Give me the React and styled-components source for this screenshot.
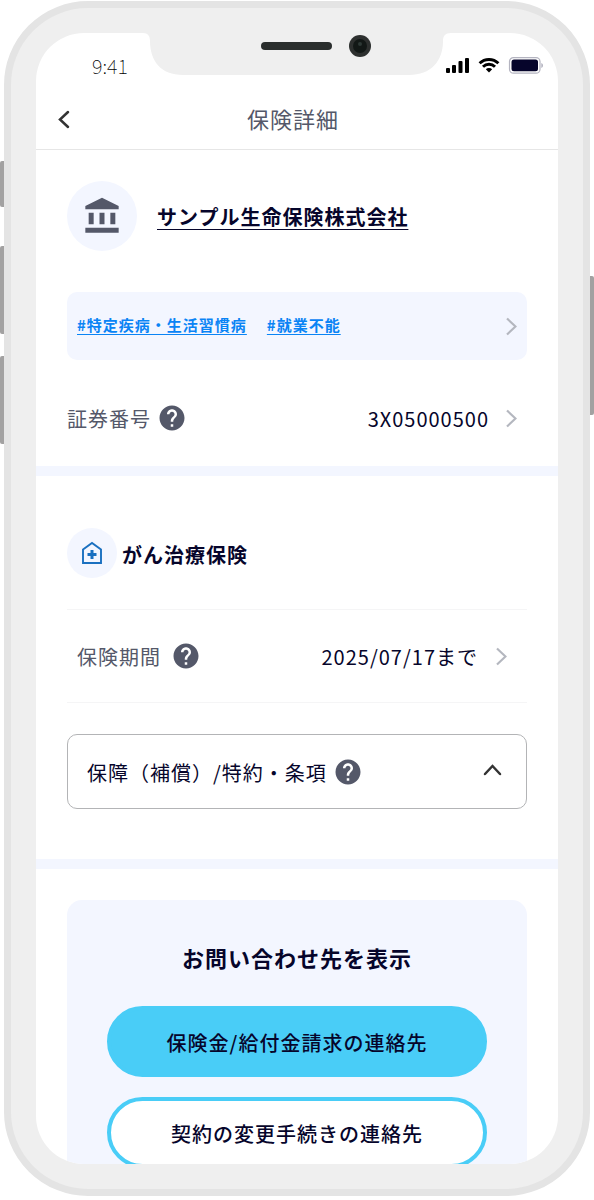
import React, { useState } from "react";
import styled, { createGlobalStyle, css } from "styled-components";
import { MdAccountBalance, MdHelp } from "react-icons/md";

const GlobalStyle = createGlobalStyle`
    *,
    *::before,
    *::after {
        box-sizing: border-box;
    }

    :root {
        --ink: #06052b;
        --gray: #545869;
        --pale: #f3f6ff;
        --link: #0a84f5;
        --sky: #49cdf7;
    }

    body {
        margin: 0;
        background: #fff;
        color: var(--ink);
        font-family: "Noto Sans CJK JP", "Noto Sans", sans-serif;
        font-size: 20px;
        letter-spacing: 1px;
    }

    button {
        padding: 0;
        border: none;
        background: none;
        color: inherit;
        font: inherit;
        letter-spacing: inherit;
        cursor: pointer;
    }

    svg {
        display: block;
    }
`;

const chevrons = {
    left: { width: 12, height: 19, d: "M10 2 2 9.500 10 17" },
    right: { width: 11, height: 19, d: "M1 1.500 9.500 9.500 1 17.500" },
    up: { width: 19, height: 12, d: "M2 10 9.500 2 17 10" },
};

const Chevron = ({ to = "right" }) => {
    const { width, height, d } = chevrons[to];
    return (
        <svg
            width={width}
            height={height}
            viewBox={`0 0 ${width} ${height}`}
            fill="none"
            stroke={to === "right" ? "#b4b7bf" : "#333"}
            strokeWidth={to === "right" ? 2.2 : 2.5}
            strokeLinecap={to === "right" ? "butt" : "round"}
            aria-hidden="true"
        >
            <path d={d} />
        </svg>
    );
};

const Notch = () => (
    <NotchSvg width="308" height="43" viewBox="0 0 308 43" aria-hidden="true">
        <path
            d="M0 0H308C302 0 300 3 300 8C300 28 288 42 266 42H40C18 42 7 28 7 8C7 3 5 0 0 0Z"
            fill="#efefef"
        />
        <rect x="118" y="9" width="71" height="8" rx="4" fill="#2a2e2d" />
        <circle cx="217" cy="13" r="11" fill="#2d302f" />
        <circle cx="217" cy="13" r="7" fill="#121816" />
        <circle cx="217" cy="11" r="2" fill="#2d3835" />
    </NotchSvg>
);

const StatusIcons = () => (
    <svg width="98" height="18" viewBox="0 0 98 18" aria-label="電波と電池">
        <g fill="#000">
            <rect x="0" y="11" width="4" height="5" rx="1" />
            <rect x="6" y="8" width="4" height="8" rx="1" />
            <rect x="12.500" y="4" width="4" height="12" rx="1" />
            <rect x="19" y="1" width="4" height="15" rx="1" />
            <path d="M43 15.500 39.800 12.300A4.600 4.600 0 0 1 46.200 12.300Z" />
        </g>
        <g fill="none" stroke="#000" strokeWidth="2.900">
            <path d="M33.600 6.300a13.400 13.400 0 0 1 18.800 0" />
            <path d="M37 9.800a8.500 8.500 0 0 1 12 0" />
        </g>
        <rect x="63.500" y=".6" width="30.500" height="15.600" rx="4" fill="none" stroke="#b4b4c0" strokeWidth="1.200" />
        <rect x="65.500" y="2.500" width="26.500" height="11.800" rx="2.500" fill="#06052b" />
        <path d="M95.400 6v5c2-.8 2-4.200 0-5Z" fill="#a9a9b8" />
    </svg>
);

const HouseIcon = () => (
    <svg width="22" height="24" viewBox="0 0 22 24" fill="none" stroke="#1a70c0" aria-hidden="true">
        <path d="M2 8.500 11 2l9 6.500V22H2Z" strokeWidth="1.900" />
        <path d="M11 9v9M6.500 13.500h9" strokeWidth="3" />
    </svg>
);

const Help = ({ about }) => (
    <button type="button" aria-label={`${about}について`}>
        <MdHelp size={30} color="#545869" />
    </button>
);

const App = () => {
    const [open, setOpen] = useState(true);

    return (
        <Stage>
            <GlobalStyle />
            <SideKey $top={161} $height={46} />
            <SideKey $top={246} $height={88} />
            <SideKey $top={356} $height={88} />
            <SideKey $top={276} $height={139} $right />
            <Phone>
                <Screen>
                    <Notch />
                    <StatusBar>
                        <Clock>9:41</Clock>
                        <StatusIcons />
                    </StatusBar>
                    <Header>
                        <button type="button" aria-label="戻る">
                            <Chevron to="left" />
                        </button>
                        <PageTitle>保険詳細</PageTitle>
                    </Header>

                    <CompanySection>
                        <Company>
                            <RoundIcon $size={70}>
                                <MdAccountBalance size={40} color="#545869" />
                            </RoundIcon>
                            <CompanyLink href="#company">
                                サンプル生命保険株式会社
                            </CompanyLink>
                        </Company>
                        <Tags>
                            <Tag href="#disease">#特定疾病・生活習慣病</Tag>
                            <Tag href="#disability">#就業不能</Tag>
                            <Chevron />
                        </Tags>
                        <PolicyRow>
                            <Label>証券番号</Label>
                            <Help about="証券番号" />
                            <Value>3X05000500</Value>
                            <Chevron />
                        </PolicyRow>
                    </CompanySection>

                    <PlanSection>
                        <Plan>
                            <RoundIcon $size={50}>
                                <HouseIcon />
                            </RoundIcon>
                            <PlanName>がん治療保険</PlanName>
                        </Plan>
                        <PeriodRow>
                            <Label>保険期間</Label>
                            <Help about="保険期間" />
                            <Value>2025/07/17まで</Value>
                            <Chevron />
                        </PeriodRow>
                        <Accordion>
                            <AccordionTitle>
                                保障（補償）/特約・条項
                            </AccordionTitle>
                            <Help about="保障" />
                            <Toggle
                                type="button"
                                aria-label="開閉"
                                aria-expanded={open}
                                $open={open}
                                onClick={() => setOpen(!open)}
                            >
                                <Chevron to="up" />
                            </Toggle>
                        </Accordion>
                    </PlanSection>

                    <ContactSection>
                        <ContactCard>
                            <ContactTitle>お問い合わせ先を表示</ContactTitle>
                            <PillButton type="button" $filled>
                                保険金/給付金請求の連絡先
                            </PillButton>
                            <PillButton type="button">
                                契約の変更手続きの連絡先
                            </PillButton>
                        </ContactCard>
                    </ContactSection>
                </Screen>
            </Phone>
        </Stage>
    );
};

const Stage = styled.div`
    position: relative;
    height: 100vh;
    padding: 1px 4px 4px;
    overflow: hidden;
`;

const SideKey = styled.span`
    position: absolute;
    top: ${({ $top }) => $top}px;
    width: 4px;
    height: ${({ $height }) => $height}px;
    background: #a2a1a1;
    ${({ $right }) =>
        $right
            ? css`
                  right: 0;
                  border-radius: 0 2px 2px 0;
              `
            : css`
                  left: 0;
                  border-radius: 2px 0 0 2px;
              `}
`;

const Phone = styled.div`
    height: 100%;
    padding: 25px;
    border: 7px solid #e4e4e4;
    border-radius: 84px;
    background: #efefef;
`;

const Screen = styled.main`
    position: relative;
    height: 100%;
    overflow: hidden;
    border-radius: 48px;
    background: #fff;
`;

const NotchSvg = styled.svg`
    position: absolute;
    top: 0;
    left: 50%;
    transform: translateX(-50%);
`;

const StatusBar = styled.div`
    display: flex;
    justify-content: space-between;
    align-items: center;
    height: 57px;
    padding: 9px 14px 0 56px;
`;

const Clock = styled.span`
    font-size: 20px;
    font-weight: 100;
    line-height: 24px;
    letter-spacing: normal;
    color: #000;
`;

const Header = styled.header`
    display: grid;
    grid-template-columns: 36px 1fr 44px;
    align-items: center;
    height: 60px;
    padding: 0 22px;
    border-bottom: 1px solid #e6e6e6;
`;

const PageTitle = styled.h1`
    margin: 0;
    padding-bottom: 3px;
    font-size: 22px;
    font-weight: 400;
    line-height: 32px;
    text-align: center;
    color: var(--gray);
`;

const Section = styled.section`
    padding: 31px;
    border-bottom: 10px solid var(--pale);
`;

const CompanySection = styled(Section)`
    padding-bottom: 20px;
`;

const PlanSection = styled(Section)`
    padding-top: 52px;
    padding-bottom: 50px;
`;

const ContactSection = styled(Section)`
    border-bottom: none;
`;

const Company = styled.div`
    display: flex;
    align-items: center;
    gap: 20px;
`;

const RoundIcon = styled.span`
    display: flex;
    flex: none;
    justify-content: center;
    align-items: center;
    width: ${({ $size }) => $size}px;
    height: ${({ $size }) => $size}px;
    border-radius: 50%;
    background: var(--pale);
`;

const CompanyLink = styled.a`
    padding-top: 2px;
    color: var(--ink);
    font-weight: 700;
    line-height: 30px;
    text-decoration-thickness: 1px;
    text-underline-offset: 4px;
`;

const Tags = styled.div`
    display: flex;
    align-items: center;
    gap: 20px;
    height: 68px;
    margin-top: 41px;
    padding: 0 10px;
    border-radius: 10px;
    background: var(--pale);

    svg {
        margin-left: auto;
    }
`;

const Tag = styled.a`
    padding-bottom: 2px;
    color: var(--link);
    font-size: 15px;
    font-weight: 700;
    line-height: 24px;
    text-decoration-thickness: 1px;
    text-underline-offset: 3px;
`;

const Row = styled.div`
    display: flex;
    align-items: center;
`;

const PolicyRow = styled(Row)`
    gap: 6px;
    height: 56px;
    margin-top: 30px;
    padding-right: 10px;
`;

const Label = styled.span`
    padding-top: 2px;
    color: var(--gray);
    line-height: 30px;
`;

const Value = styled.span`
    margin-left: auto;
    margin-right: 11px;
    padding-top: 2px;
    line-height: 30px;
`;

const Plan = styled.div`
    display: flex;
    align-items: center;
    gap: 5px;
    padding-bottom: 31px;
`;

const PlanName = styled.h2`
    margin: 0;
    padding-top: 3px;
    font-size: 20px;
    font-weight: 700;
    line-height: 30px;
`;

const PeriodRow = styled(Row)`
    gap: 10px;
    height: 94px;
    padding: 0 20px 0 10px;
    border-top: 1px solid #f5f5f6;
    border-bottom: 1px solid #f5f5f6;

    ${Value} {
        margin-right: 8px;
    }
`;

const Accordion = styled.div`
    display: flex;
    align-items: center;
    gap: 6px;
    height: 75px;
    margin-top: 31px;
    padding: 0 24px 0 19px;
    border: 1px solid #b3b4b6;
    border-radius: 10px;
`;

const AccordionTitle = styled.h3`
    margin: 0;
    padding-top: 2px;
    font-size: 20px;
    font-weight: 400;
    line-height: 30px;
`;

const Toggle = styled.button`
    margin-left: auto;
    padding-bottom: 4px;

    svg {
        transform: ${({ $open }) => ($open ? "none" : "rotate(180deg)")};
    }
`;

const ContactCard = styled.div`
    display: flex;
    flex-direction: column;
    gap: 20px;
    padding: 39px 40px;
    border-radius: 15px;
    background: var(--pale);
`;

const ContactTitle = styled.h2`
    margin: 0 0 11px;
    font-size: 22px;
    font-weight: 700;
    line-height: 36px;
    text-align: center;
`;

const PillButton = styled.button`
    height: 71px;
    padding-top: 2px;
    border: 4px solid var(--sky);
    border-radius: 36px;
    background: ${({ $filled }) => ($filled ? "var(--sky)" : "#fff")};
    font-weight: 500;
`;

export default App;
